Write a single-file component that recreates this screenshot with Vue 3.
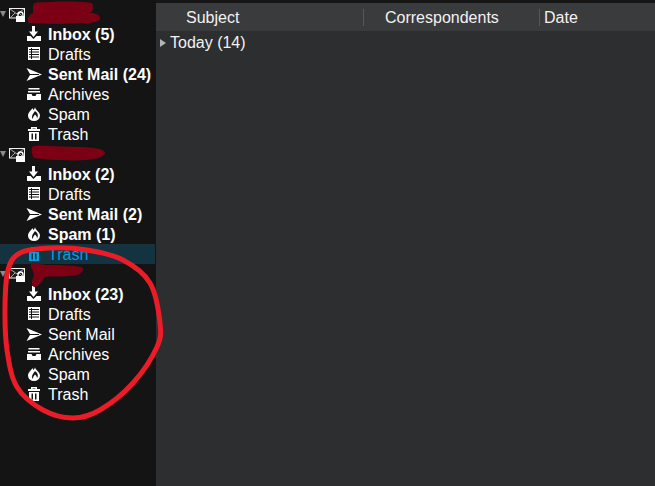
<template>
  <div class="app">
    <aside class="sidebar">
      <template v-for="(account, a) in accounts" :key="a">
        <div class="row account">
          <span class="twisty"></span>
          <svg class="account-icon" width="17" height="15" viewBox="0 0 17 15">
            <rect x="0.5" y="0.5" width="15" height="9.500" fill="#1c1c1c" stroke="#f2f2f2" />
            <path d="M1 1l7 5 7-5M1 10l5-5M15 10l-5-5" fill="none" stroke="#a8a8a8" />
            <rect x="7" y="8" width="9" height="6" fill="#fff" />
            <path d="M9 8V6.500a2.500 2.500 0 0 1 5 0V8" fill="none" stroke="#fff" stroke-width="1.400" />
          </svg>
        </div>
        <div
          v-for="folder in account.folders"
          :key="folder.name"
          class="row folder"
          :class="{ selected: folder.selected, unread: folder.count }"
        >
          <svg class="folder-icon" width="16" height="16" viewBox="0 0 16 16">
            <g v-if="folder.name === 'Inbox'" fill="currentColor">
              <path d="M6 0h3v5.500h3L7.500 11 3 5.500h3z" />
              <path d="M1 10h3.500l3 3 3-3H15v5H1z" />
            </g>
            <g v-else-if="folder.name === 'Drafts'">
              <rect x="2" y="1" width="12" height="13" fill="currentColor" />
              <path d="M3 3.500h10M3 6h10M3 8.500h10M3 11h10M5.500 2v11" stroke="#141414" stroke-width="1" fill="none" />
            </g>
            <path v-else-if="folder.name === 'Sent Mail'" d="M.5 2L16 8.500.5 15 4 9h9V8H4z" fill="currentColor" />
            <g v-else-if="folder.name === 'Archives'" fill="currentColor">
              <rect x="2.500" y="2" width="11" height="1.500" />
              <rect x="2" y="5" width="12" height="1.500" />
              <path d="M1 8h4.500l1 2h3l1-2H15v6H1z" />
            </g>
            <path
              v-else-if="folder.name === 'Spam'"
              d="M9 1c0 3 5 5 5 8.500a6 5.500 0 0 1-12 0C2 6.500 5 4.500 6.500 2c.3 1 .6 1.500 1 2C8.300 3 9 2 9 1zM9 5c-1 2-3 3-3 6 0 .8.3 1.500 1 2-.2-2 1-3 2-4.500 1 1 2 2 2 3.500 1-1 1-2.500.5-4C11 6.500 10 6 9 5z"
              fill="currentColor"
              fill-rule="evenodd"
            />
            <g v-else fill="currentColor">
              <path d="M5 3V1h6v2h3v2H2V3zM6.500 2.500v.5h3v-.5z" fill-rule="evenodd" />
              <path d="M3 6h10v9H3zM5.500 7.500v6H7v-6zM9 7.500v6h1.500v-6z" fill-rule="evenodd" />
            </g>
          </svg>
          <span class="label">{{ folder.name }}<template v-if="folder.count"> ({{ folder.count }})</template></span>
        </div>
      </template>
    </aside>

    <main class="content">
      <div class="top-strip"></div>
      <header class="columns">
        <div class="column subject">Subject</div>
        <div class="column correspondents">Correspondents</div>
        <div class="column date">Date</div>
      </header>
      <div class="group">
        <span class="group-twisty"></span>
        <span>Today (14)</span>
      </div>
    </main>

    <!-- scribbles drawn over the screenshot -->
    <svg class="markup" width="655" height="486" viewBox="0 0 655 486">
      <g fill="#7c0014">
        <path d="M34 3c20-2 45-2 58 0 2 3 1 8-2 10 4 0 10 1 10 5s-8 5-16 5c-18 1-40 1-55 0-3-4 0-8 4-10 0-4 0-8 1-10z" />
        <path d="M33 146c15-1 30 1 45 1 10 0 24 1 27 5 1 4-8 7-18 8-18 1-38 0-53-2-3-4-3-9-1-12z" />
        <path d="M31 263c6-1 8 2 16 2 14 0 30 0 36 3 1 5-6 8-14 8-8 1-17 0-24 1-3 3-5 8-9 10-4 1-5-4-3-9 2-3 0-5 0-7-2-3-3-5-2-8z" />
      </g>
      <path :d="ringPath" fill="none" stroke="#ea1c28" stroke-width="5" stroke-linejoin="round" />
    </svg>
  </div>
</template>

<script setup>
const accounts = [
  {
    folders: [
      { name: 'Inbox', count: 5 },
      { name: 'Drafts' },
      { name: 'Sent Mail', count: 24 },
      { name: 'Archives' },
      { name: 'Spam' },
      { name: 'Trash' },
    ],
  },
  {
    folders: [
      { name: 'Inbox', count: 2 },
      { name: 'Drafts' },
      { name: 'Sent Mail', count: 2 },
      { name: 'Spam', count: 1 },
      { name: 'Trash', selected: true },
    ],
  },
  {
    folders: [
      { name: 'Inbox', count: 23 },
      { name: 'Drafts' },
      { name: 'Sent Mail' },
      { name: 'Archives' },
      { name: 'Spam' },
      { name: 'Trash' },
    ],
  },
];

// hand-drawn ring, smoothed through these points
const ring = [
  [50, 248], [87, 250], [123, 260], [150, 283], [160, 323], [157, 347], [133, 383], [100, 410],
  [73, 418], [43, 410], [17, 387], [7, 350], [5, 307], [8, 270], [20, 253],
];

const ringPath = ring.reduce((d, p, i) => {
  const n = ring.length;
  const p0 = ring[(i - 1 + n) % n];
  const p2 = ring[(i + 1) % n];
  const p3 = ring[(i + 2) % n];
  const c1 = [p[0] + (p2[0] - p0[0]) / 6, p[1] + (p2[1] - p0[1]) / 6];
  const c2 = [p2[0] - (p3[0] - p[0]) / 6, p2[1] - (p3[1] - p[1]) / 6];
  return `${d} C${c1} ${c2} ${p2}`;
}, `M${ring[0]}`);
</script>

<style scoped>
.app {
  position: relative;
  display: flex;
  width: 655px;
  height: 486px;
  overflow: hidden;
  background: #141414;
  font-family: "Liberation Sans", Arial, sans-serif;
  font-size: 16px;
  color: #fff;
}

.sidebar {
  display: flex;
  flex-direction: column;
  flex: none;
  width: 155px;
  padding-top: 4px;
  margin-right: 1px;
  box-sizing: border-box;
}

.row {
  display: flex;
  align-items: center;
  height: 20px;
  flex: none;
}

.twisty {
  width: 0;
  height: 0;
  border-left: 3.500px solid transparent;
  border-right: 3.500px solid transparent;
  border-top: 6px solid #8a8a8a;
}

.account-icon {
  margin: 3px 0 0 3px;
}

.folder {
  padding-left: 26px;
  gap: 6px;
}

.folder-icon {
  flex: none;
}

.folder.unread {
  font-weight: bold;
}

.selected {
  background: #12333f;
  color: #0a9be0;
}

.label {
  padding-top: 2px;
  white-space: nowrap;
}

.content {
  flex: 1;
  display: flex;
  flex-direction: column;
  background: #2d2e30;
}

.top-strip {
  height: 3px;
  background: #161616;
}

.columns {
  display: flex;
  align-items: center;
  height: 28px;
  background: #3a3b3d;
  color: #f2f2f2;
}

.column {
  box-sizing: border-box;
  height: 17px;
  padding-top: 2px;
  display: flex;
  align-items: center;
}

.subject {
  width: 207px;
  padding-left: 30px;
}

.correspondents {
  width: 176px;
  padding-left: 21px;
  border-left: 1px solid #565759;
}

.date {
  padding-left: 4px;
  border-left: 1px solid #565759;
}

.group {
  display: flex;
  align-items: center;
  height: 24px;
  padding-left: 4px;
  gap: 4px;
  color: #f2f2f2;
}

.group-twisty {
  width: 0;
  height: 0;
  border-top: 4px solid transparent;
  border-bottom: 4px solid transparent;
  border-left: 6px solid #b4b4b4;
}

.markup {
  position: absolute;
  top: 0;
  left: 0;
  pointer-events: none;
}
</style>
